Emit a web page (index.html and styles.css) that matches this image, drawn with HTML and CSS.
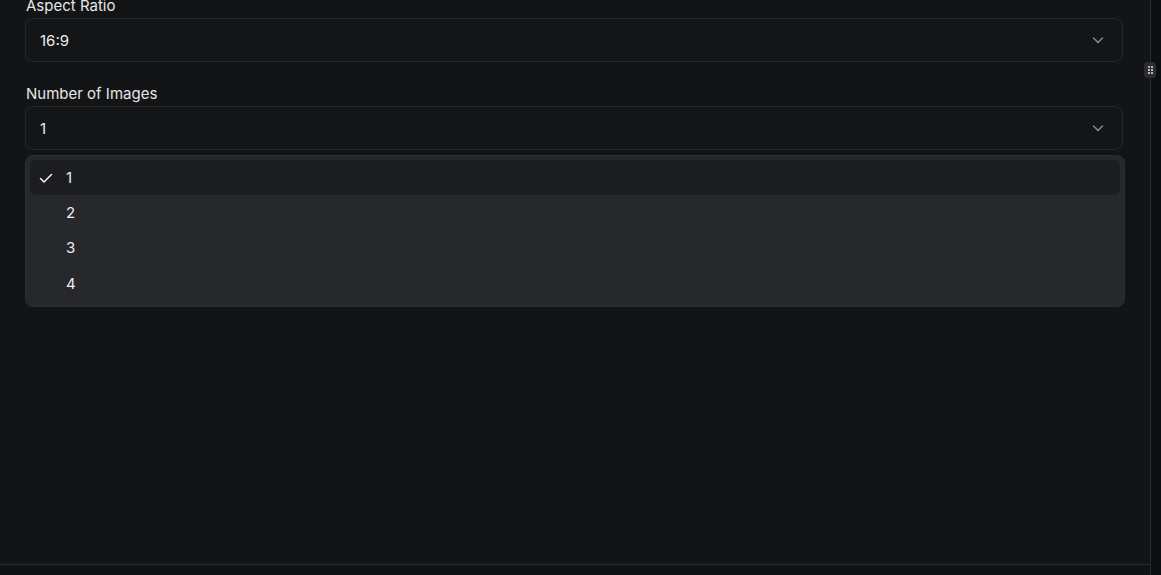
FILE: index.html
```html
<!DOCTYPE html>
<html lang="en">
<head>
<meta charset="utf-8">
<title>Image settings</title>
<link rel="stylesheet" href="styles.css">
</head>
<body>
<div class="layout">
  <div class="left-col">
    <section class="panel">
      <div class="form">
        <div class="field">
          <label class="label">Aspect Ratio</label>
          <div class="select">
            <span class="select-value">16:9</span>
            <svg class="chevron" width="16" height="16" viewBox="0 0 16 16" fill="none"><path d="M3.5 6l4.5 4.5 4.5-4.5" stroke="currentColor" stroke-width="1.4" stroke-linecap="round" stroke-linejoin="round"/></svg>
          </div>
        </div>
        <div class="field field-open">
          <label class="label">Number of Images</label>
          <div class="select">
            <span class="select-value">1</span>
            <svg class="chevron" width="16" height="16" viewBox="0 0 16 16" fill="none"><path d="M3.5 6l4.5 4.5 4.5-4.5" stroke="currentColor" stroke-width="1.4" stroke-linecap="round" stroke-linejoin="round"/></svg>
          </div>
          <div class="menu">
            <div class="option selected">
              <svg class="check" width="16" height="16" viewBox="0 0 16 16" fill="none"><path d="M2.5 8.5l3.5 3.5 7.5-7.5" stroke="currentColor" stroke-width="1.5" stroke-linecap="round" stroke-linejoin="round"/></svg>
              <span>1</span>
            </div>
            <div class="option"><span class="check-space"></span><span>2</span></div>
            <div class="option"><span class="check-space"></span><span>3</span></div>
            <div class="option"><span class="check-space"></span><span>4</span></div>
          </div>
        </div>
      </div>
    </section>
    <div class="panel-footer"></div>
  </div>
  <div class="divider">
    <div class="grip">
      <span></span><span></span><span></span><span></span><span></span><span></span>
    </div>
  </div>
  <div class="side"></div>
</div>
</body>
</html>
```

FILE: styles.css
```css
* { box-sizing: border-box; }

html, body {
  margin: 0;
  height: 100%;
  background: #0d0e10;
  font-family: Inter, "Noto Sans", sans-serif;
  color: #ececee;
  overflow: hidden;
}

.layout {
  display: flex;
  height: 575px;
}

.left-col {
  width: 1150px;
  display: flex;
  flex-direction: column;
}

.panel {
  height: 565px;
  background: #131416;
  border-bottom: 1px solid #2a2b2f;
  padding: 0 27px 0 25px;
  overflow: hidden;
}

.panel-footer {
  flex: 1;
  background: #111214;
}

.form {
  margin-top: -6px;
  display: flex;
  flex-direction: column;
  gap: 20px;
}

.field {
  display: flex;
  flex-direction: column;
  position: relative;
}

.label {
  font-size: 15px;
  line-height: 24px;
  color: #e6e6e8;
  padding-left: 1px;
}

.select {
  height: 44px;
  border: 1px solid #26272b;
  border-radius: 8px;
  background: #141517;
  display: flex;
  align-items: center;
  justify-content: space-between;
  padding: 0 16px 0 14px;
}

.select-value {
  font-size: 15px;
  color: #ececee;
}

.chevron {
  color: #8d8e93;
}

.menu {
  position: absolute;
  top: 73px;
  left: 0;
  right: -2px;
  background: #27282c;
  border: 1px solid #2d2e32;
  border-radius: 8px;
  padding: 4px 4px 5px;
  display: flex;
  flex-direction: column;
  z-index: 2;
}

.option {
  height: 35px;
  display: flex;
  align-items: center;
  gap: 12px;
  padding: 0 8px;
  border-radius: 6px;
  font-size: 15px;
  color: #ececee;
}

.option:last-child {
  height: 36px;
}

.option.selected {
  background: #1c1d21;
}

.check, .check-space {
  width: 16px;
  height: 16px;
  flex: none;
  color: #f2f2f4;
}

.divider {
  width: 1px;
  background: #2a2b2f;
  position: relative;
}

.grip {
  position: absolute;
  top: 62px;
  left: -6px;
  width: 12px;
  height: 16px;
  border-radius: 4px;
  background: #2c2d31;
  display: grid;
  grid-template-columns: 2px 2px;
  grid-auto-rows: 2px;
  column-gap: 1px;
  row-gap: 1px;
  align-content: center;
  justify-content: center;
}

.grip span {
  background: #e4e4e6;
  border-radius: 1px;
}

.side {
  flex: 1;
  background: #0d0e10;
}
```
